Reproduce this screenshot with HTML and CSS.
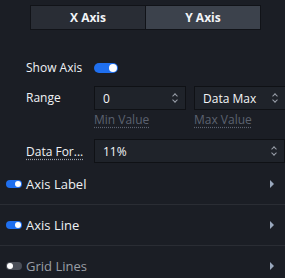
FILE: index.html
```html
<!DOCTYPE html>
<html lang="en">

<head>
    <meta charset="UTF-8">
    <title>Axis Settings</title>
    <link rel="stylesheet" href="styles.css">
</head>

<body>
    <div class="panel">
        <div class="tabs">
            <div class="tab">X Axis</div>
            <div class="tab active">Y Axis</div>
        </div>

        <div class="form">
            <div class="row show">
                <span class="label">Show Axis</span>
                <span class="switch on"></span>
            </div>

            <div class="row top">
                <span class="label">Range</span>
                <div class="field">
                    <div class="input"><span>0</span><span class="spin"></span></div>
                    <span class="hint">Min Value</span>
                </div>
                <div class="field">
                    <div class="input"><span>Data Max</span><span class="spin"></span></div>
                    <span class="hint">Max Value</span>
                </div>
            </div>

            <div class="row last">
                <span class="label dotted">Data For...</span>
                <div class="input wide"><span>11%</span><span class="spin"></span></div>
            </div>
        </div>

        <div class="section">
            <span class="switch small on"></span>
            <span class="title">Axis Label</span>
            <span class="chevron"></span>
        </div>
        <div class="section">
            <span class="switch small on"></span>
            <span class="title">Axis Line</span>
            <span class="chevron"></span>
        </div>
        <div class="section">
            <span class="switch small"></span>
            <span class="title muted">Grid Lines</span>
            <span class="chevron"></span>
        </div>
    </div>
</body>

</html>
```

FILE: styles.css
```css
body {
    margin: 0;
    background: #1b1e25;
    font-family: "Open Sans", "Noto Sans", sans-serif;
    font-size: 12px;
    color: #e8eaee;
    width: 285px;
    height: 278px;
    overflow: hidden;
}

.tabs {
    display: flex;
    margin: 5px 24px 0 30px;
    border: 1px solid #111318;
    height: 23px;
}

.tab {
    flex: 1;
    display: flex;
    align-items: center;
    justify-content: center;
    background: #292d35;
    font-weight: bold;
    color: #f2f4f7;
}

.tab.active {
    background: #3c424c;
    border-left: 1px solid #111318;
}

.form {
    padding: 29px 0 0 26px;
}

.row {
    display: flex;
    align-items: center;
    margin-bottom: 11px;
}

.row.show {
    margin-bottom: 10px;
}

.row.last {
    margin-bottom: 1px;
}

.row.top {
    align-items: flex-start;
}

.row.top .label {
    line-height: 24px;
}

.label {
    width: 68px;
    flex: none;
    color: #f0f2f5;
}

.row.show .label {
    width: auto;
    margin-right: 12px;
}

.dotted {
    text-decoration: underline dotted #9aa0aa;
    text-underline-offset: 3px;
}

.field {
    display: flex;
    flex-direction: column;
    width: 92px;
    margin-right: 8px;
    flex: none;
}

.input {
    height: 24px;
    box-sizing: border-box;
    border: 1px solid #0f1115;
    background: #1f232a;
    display: flex;
    align-items: center;
    justify-content: space-between;
    padding: 0 6px 0 8px;
    color: #f4f5f7;
}

.input.wide {
    flex: 1;
}

.spin {
    width: 7px;
    height: 12px;
    position: relative;
}

.spin::before,
.spin::after {
    content: "";
    position: absolute;
    left: 1px;
    width: 3px;
    height: 3px;
    border: solid #9aa0aa;
    border-width: 1.5px 0 0 1.5px;
}

.spin::before {
    top: 2px;
    transform: rotate(45deg);
}

.spin::after {
    bottom: 2px;
    transform: rotate(225deg);
}

.hint {
    color: #5b6270;
    margin-top: 1px;
    text-decoration: underline dotted #5b6270;
    text-underline-offset: 3px;
}

.switch {
    display: inline-block;
    width: 24px;
    height: 10px;
    border-radius: 5px;
    background: #4a4e57;
    position: relative;
}

.switch::after {
    content: "";
    position: absolute;
    top: 1px;
    left: 1px;
    width: 8px;
    height: 8px;
    border-radius: 50%;
    background: #fff;
}

.switch.on {
    background: #1f6fef;
}

.switch.on::after {
    left: auto;
    right: 1px;
}

.switch.small {
    width: 16px;
    height: 8px;
    border-radius: 4px;
    margin-right: 4px;
}

.switch.small::after {
    width: 6px;
    height: 6px;
}

.section {
    display: flex;
    align-items: center;
    height: 40px;
    padding-left: 6px;
    border-bottom: 1px solid #2a2d34;
}

.section:last-child {
    border-bottom: none;
}

.title {
    flex: 1;
    font-size: 13px;
    color: #eef0f3;
}

.title.muted {
    color: #9a9ea6;
}

.chevron {
    width: 0;
    height: 0;
    margin-right: 11px;
    border-left: 4px solid #9aa8bd;
    border-top: 4px solid transparent;
    border-bottom: 4px solid transparent;
}
```
